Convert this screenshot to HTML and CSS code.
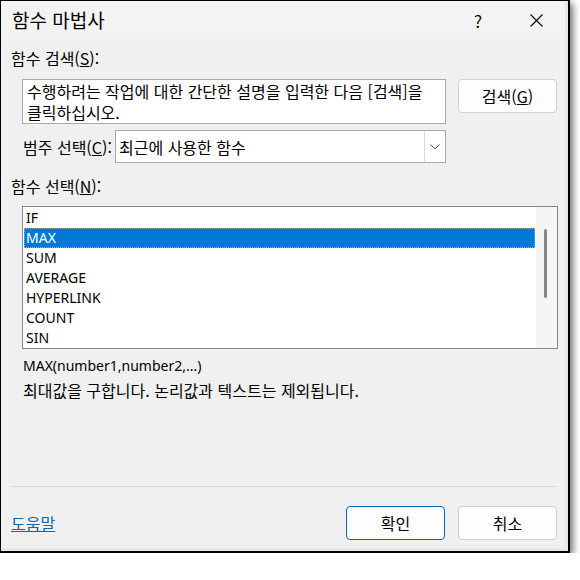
FILE: index.html
```html
<!DOCTYPE html>
<html lang="ko">
<head>
<meta charset="utf-8">
<title>함수 마법사</title>
<link rel="stylesheet" href="styles.css">
</head>
<body>
<div class="window">
  <div class="titlebar">
    <span class="title">함수 마법사</span>
    <span class="cap help">?</span>
    <span class="cap close">
      <svg width="13" height="13" viewBox="0 0 13 13"><path d="M0.5 0.5 L12.5 12.5 M12.5 0.5 L0.5 12.5" stroke="#000" stroke-width="1.1" fill="none"/></svg>
    </span>
  </div>
  <div class="content">
    <div class="label l1">함수 검색(<u>S</u>):</div>
    <div class="search-row">
      <div class="searchbox">수행하려는 작업에 대한 간단한 설명을 입력한 다음 [검색]을<br>클릭하십시오.</div>
      <div class="btn search-btn">검색(<u>G</u>)</div>
    </div>
    <div class="cat-row">
      <div class="cat-label">범주 선택(<u>C</u>):</div>
      <div class="select">
        <span class="select-value">최근에 사용한 함수</span>
        <span class="dd">
          <svg width="10" height="6" viewBox="0 0 10 6"><polyline points="0.5,0.5 5,5 9.5,0.5" fill="none" stroke="#5a5a5a" stroke-width="1"/></svg>
        </span>
      </div>
    </div>
    <div class="label l3">함수 선택(<u>N</u>):</div>
    <div class="listbox">
      <div class="items">
        <div class="item">IF</div>
        <div class="item sel">MAX</div>
        <div class="item">SUM</div>
        <div class="item">AVERAGE</div>
        <div class="item">HYPERLINK</div>
        <div class="item">COUNT</div>
        <div class="item">SIN</div>
      </div>
      <div class="scroll"><div class="thumb"></div></div>
    </div>
    <div class="sig">MAX(number1,number2,...)</div>
    <div class="desc">최대값을 구합니다. 논리값과 텍스트는 제외됩니다.</div>
    <div class="sep"></div>
    <div class="footer">
      <span class="help-link">도움말</span>
      <div class="btn ok">확인</div>
      <div class="btn cancel">취소</div>
    </div>
  </div>
</div>
</body>
</html>
```
FILE: styles.css
```css
body {
  margin: 0;
  background: #fff;
  font-family: "Noto Sans CJK KR", "Noto Sans", sans-serif;
  font-size: 16px;
  color: #000;
}

.window {
  width: 570px;
  height: 553px;
  box-sizing: border-box;
  border: 1px solid #000;
  border-right-width: 2px;
  border-bottom-width: 2px;
  background: #f0f0f0;
  box-shadow: 3px 3px 7px rgba(0, 0, 0, 0.55), inset -3px -3px 0 #e6e6f1;
}

.titlebar {
  height: 38px;
  margin-right: 3px;
  background: #f3f3f3;
  display: flex;
  align-items: center;
  padding-left: 11px;
}

.title {
  flex: 1;
  font-size: 19px;
  line-height: 38px;
}

.cap {
  width: 58px;
  height: 38px;
  display: flex;
  align-items: center;
  justify-content: center;
}

.help {
  font-size: 17px;
}

.content {
  padding-left: 10px;
}

.label {
  line-height: 20px;
}

.l1 {
  margin-top: 9px;
}

.search-row {
  display: flex;
  align-items: flex-start;
  margin-top: 11px;
}

.searchbox {
  margin-left: 11px;
  width: 424px;
  height: 45px;
  box-sizing: border-box;
  border: 1px solid #a9a9a9;
  background: #fff;
  padding: 1px 4px;
  line-height: 21px;
}

.btn {
  box-sizing: border-box;
  border: 1px solid #d0d0d0;
  border-radius: 4px;
  background: #fdfdfd;
  display: flex;
  align-items: center;
  justify-content: center;
  width: 99px;
  height: 34px;
}

.search-btn {
  margin-left: 12px;
}

.cat-row {
  display: flex;
  align-items: center;
  margin-top: 6px;
  height: 33px;
}

.cat-label {
  margin-left: 12px;
  width: 92px;
}

.select {
  width: 331px;
  height: 33px;
  box-sizing: border-box;
  border: 1px solid #a9a9a9;
  background: #fff;
  display: flex;
  align-items: center;
  padding-left: 3px;
}

.select-value {
  flex: 1;
}

.dd {
  width: 21px;
  height: 31px;
  box-sizing: border-box;
  border-left: 1px solid #d9d9d9;
  display: flex;
  align-items: center;
  justify-content: center;
}

.l3 {
  margin-top: 13px;
}

.listbox {
  margin-top: 10px;
  margin-left: 11px;
  width: 536px;
  height: 143px;
  box-sizing: border-box;
  border: 1px solid #828790;
  background: #fff;
  display: flex;
}

.items {
  width: 513px;
  box-sizing: border-box;
  padding: 1px 1px 0 1px;
  font-family: "Noto Sans", sans-serif;
  font-size: 14px;
}

.item {
  height: 20px;
  line-height: 20px;
  padding-left: 2px;
}

.item.sel {
  background: #0078d7;
  color: #fff;
  outline: 1px dotted #e89a3c;
  outline-offset: -1px;
}

.scroll {
  width: 21px;
  background: #f5f5f5;
}

.thumb {
  margin: 22px 0 0 8px;
  width: 3px;
  height: 69px;
  border-radius: 2px;
  background: #858585;
}

.sig {
  margin-left: 12px;
  margin-top: 6px;
  line-height: 21px;
  font-family: "Noto Sans", sans-serif;
  font-size: 14px;
}

.desc {
  margin-left: 12px;
  margin-top: 3px;
  line-height: 22px;
}

.sep {
  margin-top: 85px;
  margin-left: -1px;
  width: 547px;
  height: 1px;
  background: #dadada;
}

.footer {
  display: flex;
  align-items: center;
  margin-top: 19px;
  height: 34px;
  padding-right: 11px;
}

.help-link {
  flex: 1;
  color: #0067c0;
  text-decoration: underline;
}

.ok {
  border-color: #0067c0;
}

.cancel {
  margin-left: 13px;
}
```
